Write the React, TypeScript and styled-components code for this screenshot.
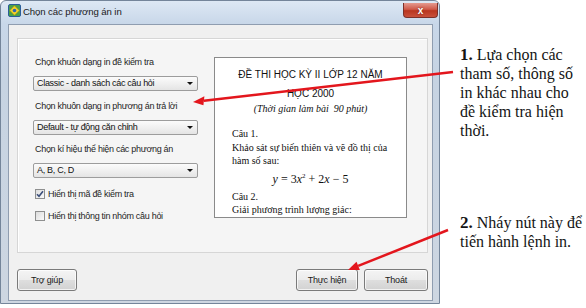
import React from "react"
import styled, { createGlobalStyle } from "styled-components"

const GlobalStyle = createGlobalStyle`
    html, body {
        margin: 0;
        padding: 0;
        background: #fff;
        overflow: hidden;
    }
    #root {
        width: 586px;
        height: 308px;
    }
`

const Page = styled.div`
    position: relative;
    width: 586px;
    height: 308px;
    display: flex;
    align-items: flex-start;
    font-family: "Liberation Sans", Arial, sans-serif;
`

const Window = styled.div`
    width: 440px;
    height: 304px;
    box-sizing: border-box;
    display: flex;
    flex-direction: column;
    padding: 0 6px 2px 7px;
    border: 1px solid #74859a;
    border-radius: 6px 6px 0 0;
    background: linear-gradient(#dde8f4, #c8d7e9 23px, #c6d3e2 80px, #cdd6e1);
`

const TitleBar = styled.div`
    height: 23px;
    display: flex;
    align-items: flex-start;
    padding-top: 3px;
    box-sizing: border-box;
`

const TitleText = styled.span`
    margin-left: 2px;
    margin-top: 2px;
    font-size: 9.6px;
    color: #1a1a1a;
    letter-spacing: -0.1px;
`

const CloseButton = styled.div`
    margin-left: auto;
    margin-right: -5px;
    margin-top: -1px;
    width: 35px;
    height: 15px;
    box-sizing: border-box;
    border: 1px solid #7c3028;
    border-top: 0;
    border-radius: 0 0 4px 4px;
    background: linear-gradient(#e59a8f, #cf5a4a 45%, #b9361f 55%, #c9503b);
    color: #fff;
    font-size: 10px;
    font-weight: bold;
    display: flex;
    align-items: center;
    justify-content: center;
    text-shadow: 0 0 2px #6b1d12;
`

const Client = styled.div`
    flex: 1;
    display: flex;
    flex-direction: column;
    background: #f0f0f0;
    border: 1px solid #8f9db0;
`

const Panel = styled.div`
    margin: 13px 4px 0 8px;
    height: 215px;
    box-sizing: border-box;
    border: 1px solid #d6d6d6;
    box-shadow: inset 1px 1px 0 #fff;
    background: #f5f5f5;
    padding: 17px 20px 0 15px;
    display: grid;
    grid-template-columns: 165px 193px;
    column-gap: 16px;
    align-items: start;
`

const Form = styled.div`
    display: flex;
    flex-direction: column;
`

const FieldLabel = styled.div`
    height: 12px;
    line-height: 12px;
    padding-left: 2px;
    margin-bottom: 8px;
    font-size: 9px;
    letter-spacing: -0.3px;
    color: #1e1e1e;
    white-space: nowrap;
`

const Combo = styled.div`
    position: relative;
    height: 15px;
    margin-bottom: 8.5px;
    box-sizing: border-box;
    border: 1px solid #9c9c9c;
    border-radius: 2px;
    background: linear-gradient(#fbfbfb, #f0f0f0 50%, #e4e4e4);
    padding-left: 3px;
    font-size: 9px;
    letter-spacing: -0.3px;
    line-height: 13px;
    color: #111;
    white-space: nowrap;

    &::after {
        content: "";
        position: absolute;
        right: 4px;
        top: 5px;
        border-left: 3px solid transparent;
        border-right: 3px solid transparent;
        border-top: 3.5px solid #111;
    }
`

const CheckRow = styled.div`
    display: flex;
    align-items: center;
    height: 14px;
    padding-left: 2px;
    margin-bottom: 8px;
    font-size: 9px;
    letter-spacing: -0.3px;
    color: #1e1e1e;
    white-space: nowrap;
`

const CheckBox = styled.div`
    width: 10px;
    height: 10px;
    margin-right: 3px;
    box-sizing: border-box;
    border: 1px solid #8e8f8f;
    background: linear-gradient(135deg, #dcdcdc, #fafafa);
    display: flex;
    align-items: center;
    justify-content: center;
`

const Preview = styled.div`
    margin-top: 1px;
    height: 161px;
    box-sizing: border-box;
    border: 1px solid #8a8a8a;
    background: #fff;
    overflow: hidden;
    padding-top: 7px;
    color: #111;
`

const DocTitle = styled.div`
    text-align: center;
    font-size: 10px;
    line-height: 19px;
`

const DocTime = styled.div`
    text-align: center;
    font-family: "Liberation Serif", "Times New Roman", serif;
    font-style: italic;
    font-size: 10px;
    line-height: 11px;
`

const DocBody = styled.div`
    margin-top: 13px;
    padding-left: 17px;
    font-family: "Liberation Serif", "Times New Roman", serif;
    font-size: 10px;
    line-height: 13.5px;
    white-space: nowrap;
`

const Formula = styled.div<{ $h: number }>`
    margin-left: -17px;
    height: ${(p) => p.$h}px;
    line-height: ${(p) => p.$h}px;
    text-align: center;
    font-size: 12px;

    i {
        font-style: italic;
    }
    sup {
        font-size: 7px;
        vertical-align: 5px;
        line-height: 0;
    }
`

const ButtonRow = styled.div`
    display: flex;
    gap: 6px;
    margin-top: 16px;
    padding: 0 4px 0 8px;
`

const Button = styled.div<{ $w: number }>`
    width: ${(p) => p.$w}px;
    height: 22px;
    box-sizing: border-box;
    border: 1px solid #7a7a7a;
    border-radius: 3px;
    background: linear-gradient(#f4f4f4, #ececec 48%, #dedede 52%, #d2d2d2);
    box-shadow: inset 0 0 0 1px rgba(255, 255, 255, 0.7);
    font-size: 9px;
    letter-spacing: -0.2px;
    color: #1a1a1a;
    display: flex;
    align-items: center;
    justify-content: center;
`

const Spacer = styled.div`
    flex: 1;
`

const Notes = styled.div`
    margin-left: 20px;
    padding-top: 44.5px;
    font-family: "Liberation Serif", "Times New Roman", serif;
    font-size: 16px;
    line-height: 19px;
    color: #141414;
    white-space: nowrap;
`

const Note = styled.div<{ $gap?: number }>`
    margin-top: ${(p) => p.$gap || 0}px;

    b {
        font-size: 17px;
    }
`

const Arrows = styled.svg`
    position: absolute;
    left: 0;
    top: 0;
    pointer-events: none;
`

const AppIcon = () => (
    <svg width="13" height="13" viewBox="0 0 13 13">
        <rect x="0.5" y="0.5" width="12" height="12" rx="1.5" fill="#4aa04a" stroke="#2a5d9a" />
        <path d="M6.5 1.8 L11.2 6.5 L6.5 11.2 L1.8 6.5 Z" fill="#f4d426" stroke="#b48f10" strokeWidth="0.6" />
        <circle cx="6.5" cy="6.5" r="1.8" fill="#2f64b4" />
    </svg>
)

const Tick = () => (
    <svg width="8" height="8" viewBox="0 0 8 8">
        <path d="M1 4.2 L3 6.3 L7 1.2" fill="none" stroke="#3c4f7a" strokeWidth="1.6" />
    </svg>
)

export default function App() {
    return (
        <>
            <GlobalStyle />
            <Page>
                <Window>
                    <TitleBar>
                        <AppIcon />
                        <TitleText>Chọn các phương án in</TitleText>
                        <CloseButton>x</CloseButton>
                    </TitleBar>
                    <Client>
                        <Panel>
                            <Form>
                                <FieldLabel>Chọn khuôn dạng in đề kiểm tra</FieldLabel>
                                <Combo>Classic - danh sách các câu hỏi</Combo>
                                <FieldLabel>Chọn khuôn dạng in phương án trả lời</FieldLabel>
                                <Combo>Default - tự động căn chỉnh</Combo>
                                <FieldLabel>Chọn kí hiệu thể hiện các phương án</FieldLabel>
                                <Combo>A, B, C, D</Combo>
                                <CheckRow>
                                    <CheckBox><Tick /></CheckBox>
                                    Hiển thị mã đề kiểm tra
                                </CheckRow>
                                <CheckRow>
                                    <CheckBox />
                                    Hiển thị thông tin nhóm câu hỏi
                                </CheckRow>
                            </Form>
                            <Preview>
                                <DocTitle>
                                    ĐỀ THI HỌC KỲ II LỚP 12 NĂM<br />HỌC 2000
                                </DocTitle>
                                <DocTime>(Thời gian làm bài&nbsp; 90 phút)</DocTime>
                                <DocBody>
                                    Câu 1.<br />
                                    Khảo sát sự biến thiên và vẽ đồ thị của<br />
                                    hàm số sau:
                                    <Formula $h={22}>
                                        <i>y</i> = 3<i>x</i><sup>2</sup> + 2<i>x</i> − 5
                                    </Formula>
                                    Câu 2.<br />
                                    Giải phương trình lượng giác:
                                    <Formula $h={14}>
                                        2sin<sup>2</sup><i>x</i> − 3sin<i>x</i>cos<i>x</i> + cos<sup>2</sup><i>x</i> = 0
                                    </Formula>
                                </DocBody>
                            </Preview>
                        </Panel>
                        <ButtonRow>
                            <Button $w={60}>Trợ giúp</Button>
                            <Spacer />
                            <Button $w={62}>Thực hiện</Button>
                            <Button $w={64}>Thoát</Button>
                        </ButtonRow>
                    </Client>
                </Window>
                <Notes>
                    <Note>
                        <b>1.</b> Lựa chọn các<br />
                        tham số, thông số<br />
                        in khác nhau cho<br />
                        đề kiểm tra hiện<br />
                        thời.
                    </Note>
                    <Note $gap={73}>
                        <b>2.</b> Nháy nút này để<br />
                        tiến hành lệnh in.
                    </Note>
                </Notes>
                <Arrows width="586" height="308" viewBox="0 0 586 308">
                    <line x1="453" y1="72" x2="203.9" y2="100.7" stroke="#e3161d" strokeWidth="2.5" />
                    <polygon points="193,102 204.4,96.3 203.4,105.2" fill="#e3161d" />
                    <line x1="448" y1="230" x2="358.2" y2="265.9" stroke="#e3161d" strokeWidth="2.5" />
                    <polygon points="348,270 356.5,261.7 359.9,270.1" fill="#e3161d" />
                </Arrows>
            </Page>
        </>
    )
}
